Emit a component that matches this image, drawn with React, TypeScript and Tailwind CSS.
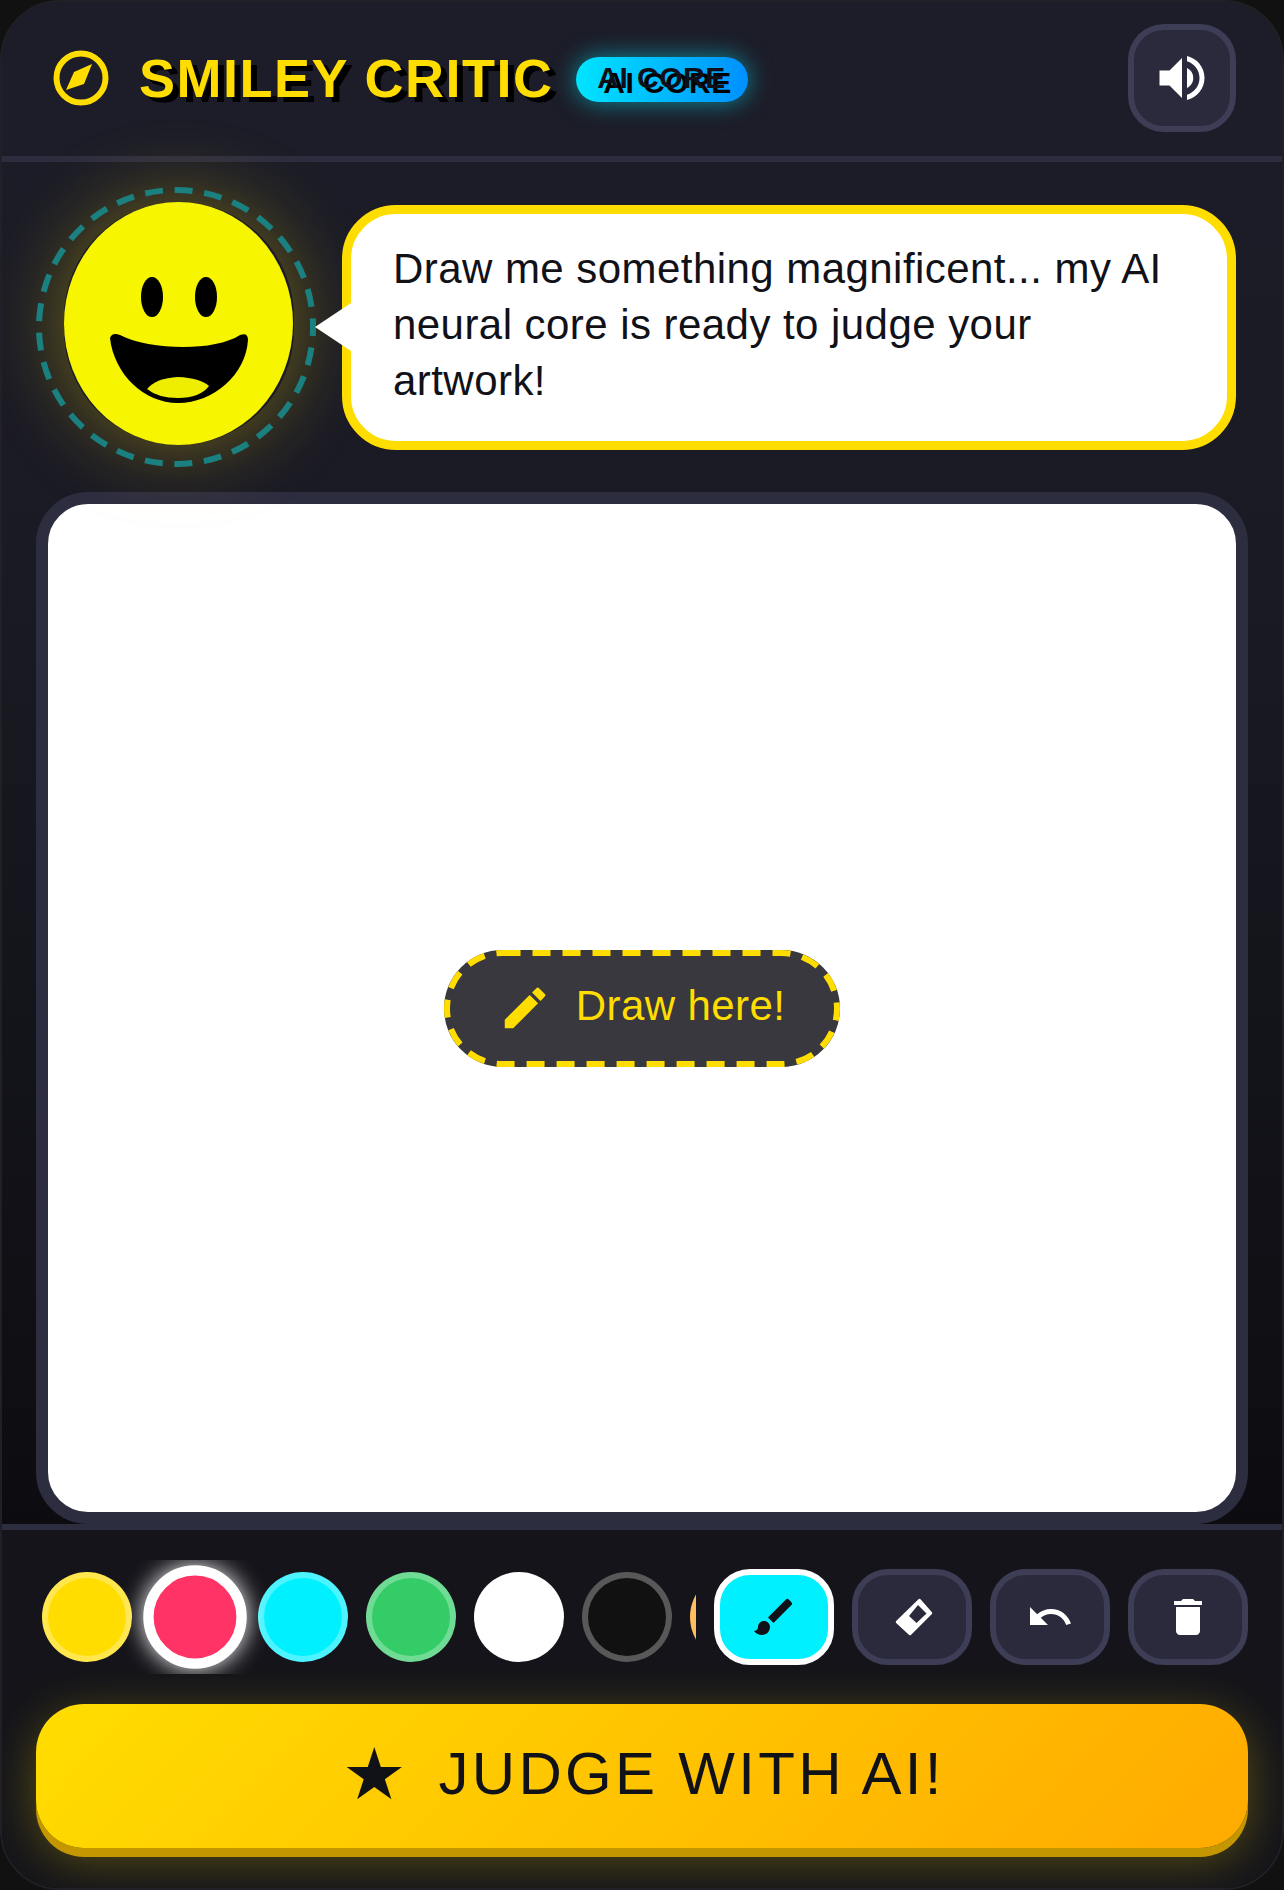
import { MdBrush, MdDelete, MdEdit, MdUndo, MdVolumeUp } from "react-icons/md";

const swatches = [
  "bg-[#ffdd00] border-white/30",
  "bg-[#ff3366] border-white",
  "bg-[#00f0ff] border-white/30",
  "bg-[#33cc66] border-white/30",
  "bg-white border-white/30",
  "bg-[#111111] border-white/30",
  "bg-[#ff9f1c] border-white/30",
  "bg-[#cc44ff] border-white/30",
];

function Compass() {
  return (
    <svg width="66" height="66" viewBox="0 0 66 66" className="shrink-0">
      <circle cx="33" cy="33" r="24.5" fill="none" stroke="#ffdd00" strokeWidth="6" />
      <path d="M18 45 L26 27 L44 19 L36 39 Z" fill="#ffdd00" />
    </svg>
  );
}

function Eraser() {
  return (
    <svg width="48" height="48" viewBox="0 0 48 48">
      <path
        d="M31.6 7 L43 20 L22 41 L9 29 Z"
        fill="#fff"
        stroke="#fff"
        strokeWidth="2.5"
        strokeLinejoin="round"
      />
      <path d="M30 12 L38.5 20.5 L28.5 30 L21 23 Z" fill="#2a2a3c" />
    </svg>
  );
}

function Smiley() {
  return (
    <svg width="230" height="243" viewBox="0 0 230 243" className="blur-[0.6px]">
      <ellipse cx="114.5" cy="121.5" rx="114.5" ry="121.5" fill="#f7f500" />
      <ellipse cx="88" cy="95" rx="11" ry="20" fill="#000" />
      <ellipse cx="142" cy="95" rx="11" ry="20" fill="#000" />
      <path
        d="M46 136 Q48 130 56 133 C85 148 150 150 176 133 Q184 130 184 138 C182 172 150 201 114 201 C80 201 50 172 46 136 Z"
        fill="#000"
      />
      <path
        d="M83 187 Q92 176 114 175 Q136 176 145 184 Q136 196 114 196 Q94 196 83 187 Z"
        fill="#f0ee00"
      />
    </svg>
  );
}

function ToolButton({ children, active }: { children: React.ReactNode; active?: boolean }) {
  return (
    <button
      className={
        active
          ? "flex h-[96px] w-[120px] shrink-0 items-center justify-center rounded-[36px] border-[6px] border-white bg-[#00f0ff] text-[#111118]"
          : "flex h-[96px] w-[120px] shrink-0 items-center justify-center rounded-[36px] border-[6px] border-[#3d3d55] bg-[#2a2a3c] text-white"
      }
    >
      {children}
    </button>
  );
}

export default function App() {
  return (
    <div className="h-[1890px] w-full bg-[#111111] font-['Liberation_Sans',sans-serif]">
      <div className="flex h-full flex-col overflow-hidden rounded-[60px] border-2 border-[#202026] bg-[linear-gradient(180deg,#1c1d28_0%,#1a1a24_30%,#0c0c10_82%)]">
        <header className="-mx-[2px] -mt-[2px] flex h-[162px] shrink-0 items-center justify-between border-b-[6px] border-[#2d2d40] bg-[#1c1d28] pl-[48px] pr-[48px]">
          <div className="flex items-center">
            <Compass />
            <h1 className="ml-[25px] text-[54px] font-bold leading-none tracking-[1.5px] text-[#ffdd00] [text-shadow:6px_5px_0_#000]">
              SMILEY CRITIC
            </h1>
            <span className="ml-[22px] mt-[2px] flex h-[45px] w-[172px] items-center justify-center rounded-full bg-[linear-gradient(90deg,#00e5ff,#0090ff)] pb-[4px] text-[30px] font-bold tracking-[0.5px] text-[#0f0f1a] shadow-[0_0_24px_rgba(0,229,255,0.55)] [text-shadow:6px_5px_0_#000]">
              AI CORE
            </span>
          </div>
          <button className="flex h-[108px] w-[108px] items-center justify-center rounded-[36px] border-[6px] border-[#3d3d55] bg-[#2a2a3c] text-white">
            <MdVolumeUp size={60} />
          </button>
        </header>

        <section className="flex h-[330px] shrink-0 items-center pl-[34px] pr-[46px]">
          <div className="relative z-10 flex h-[282px] w-[280px] shrink-0 items-center justify-center pb-[7px] pl-[6px]">
            <svg width="280" height="282" viewBox="0 0 280 282" className="absolute inset-0">
              <circle
                cx="140"
                cy="141"
                r="137"
                fill="none"
                stroke="#1a8080"
                strokeWidth="6"
                strokeDasharray="18 11.68"
                strokeDashoffset="9"
              />
            </svg>
            <div className="rounded-full shadow-[0_0_80px_rgba(255,221,0,0.38)]">
              <Smiley />
            </div>
          </div>
          <div className="relative z-20 ml-[26px] h-[245px] flex-1 rounded-[54px] border-[9px] border-[#ffdd00] bg-white px-[42px] pt-[27px] text-[42px] leading-[56px] tracking-[0.45px] text-[#111118]">
            <div className="absolute left-[-36px] top-1/2 h-0 w-0 -translate-y-1/2 border-y-[24px] border-r-[36px] border-y-transparent border-r-white" />
            Draw me something magnificent... my AI neural core is ready to judge your artwork!
          </div>
        </section>

        <main className="flex-1 px-[34px]">
          <div className="relative flex h-[1032px] items-center justify-center rounded-[52px] border-[12px] border-[#2d2d40] bg-white">
            <div className="relative flex h-[117px] w-[396px] items-center justify-center gap-[24px] rounded-full bg-[#38383e] pr-[1px] text-[42px] tracking-[0.4px] text-[#ffdd00]">
              <svg width="396" height="117" viewBox="0 0 396 117" className="absolute inset-0">
                <rect
                  x="3"
                  y="3"
                  width="390"
                  height="111"
                  rx="55.5"
                  fill="none"
                  stroke="#ffdd00"
                  strokeWidth="6"
                  strokeDasharray="18 12"
                />
              </svg>
              <MdEdit size={54} />
              <span className="pb-[5px]">Draw here!</span>
            </div>
          </div>
        </main>

        <footer className="-mx-[2px] -mb-[2px] h-[366px] shrink-0 border-t-[6px] border-[#2d2d40] bg-[#14141a] px-[36px] pt-[30px]">
          <div className="flex items-center gap-[18px]">
            <div className="flex h-[114px] w-[660px] shrink-0 items-center gap-[18px] overflow-hidden px-[6px]">
              {swatches.map((c, i) => (
                <div
                  key={c}
                  className={
                    i === 1
                      ? `h-[90px] w-[90px] shrink-0 scale-[1.15] rounded-full border-[9px] shadow-[0_0_20px_#fff] ${c}`
                      : `h-[90px] w-[90px] shrink-0 rounded-full border-[6px] ${c}`
                  }
                />
              ))}
            </div>
            <ToolButton active>
              <MdBrush size={48} />
            </ToolButton>
            <ToolButton>
              <Eraser />
            </ToolButton>
            <ToolButton>
              <MdUndo size={48} />
            </ToolButton>
            <ToolButton>
              <MdDelete size={48} />
            </ToolButton>
          </div>
          <button className="mt-[30px] flex h-[144px] w-full items-center justify-center gap-[28px] rounded-[48px] bg-[linear-gradient(135deg,#ffdd00,#ffaa00)] pb-[4px] text-[60px] leading-none tracking-[3.3px] text-[#111118] shadow-[0_9px_0_#c49600,0_12px_50px_rgba(255,221,0,0.3)]">
            <span className="ml-[3px] text-[72px]">★</span>
            <span>JUDGE WITH AI!</span>
          </button>
        </footer>
      </div>
    </div>
  );
}
